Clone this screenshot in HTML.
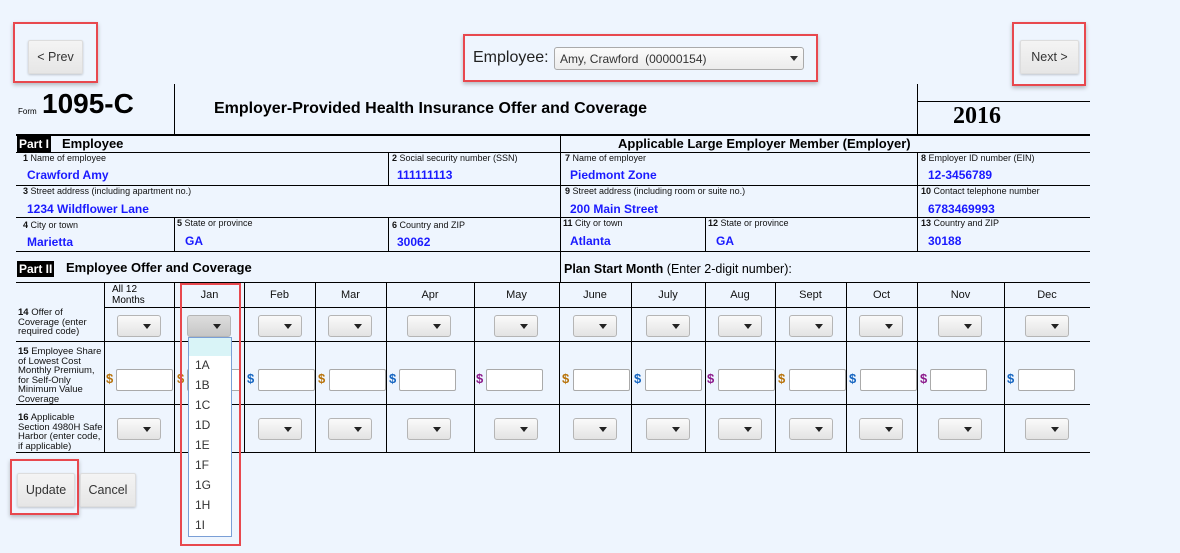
<!DOCTYPE html>
<html><head><meta charset="utf-8"><style>
*{box-sizing:border-box;margin:0;padding:0}
body{width:1180px;height:553px;background:#eef5fe;font-family:"Liberation Sans",Arial,sans-serif;position:relative;overflow:hidden;color:#000}
.a{position:absolute}
.red{position:absolute;border:2px solid #e8484e;box-shadow:0 2px 4px rgba(0,0,0,.25)}
.btn{position:absolute;background:linear-gradient(#f4f4f4,#e6e6e6);border:1px solid #ddd;border-radius:2px;box-shadow:0 1px 2px rgba(0,0,0,.2);font-family:"Liberation Sans",sans-serif;font-size:12.5px;color:#333;display:flex;align-items:center;justify-content:center}
.hl{position:absolute;height:1px;background:#000}
.vl{position:absolute;width:1px;background:#000}
.lb{position:absolute;font-size:9px;color:#111;white-space:nowrap}
.lb b{font-weight:bold}
.v{position:absolute;font-size:12px;font-weight:bold;color:#1a1aff;white-space:nowrap}
.sel{position:absolute;width:44px;height:22px;border:1px solid #b5b5b5;border-radius:3px;background:linear-gradient(#fafafa,#e3e3e3)}
.sel:after{content:"";position:absolute;right:9px;top:8px;border-left:4px solid transparent;border-right:4px solid transparent;border-top:5px solid #222}
.inp{position:absolute;height:22px;background:#fff;border:1px solid #aaa;border-radius:2px}
.d{position:absolute;font-size:13px;font-weight:bold}
.mh{position:absolute;font-size:11px;color:#111;text-align:center;top:289px}
.rl{position:absolute;font-size:9.5px;line-height:9.5px;color:#111;left:18px}
.it{position:absolute;left:195px;font-family:"Liberation Sans",sans-serif;font-size:12px;color:#333}
</style></head><body>
<div class="red" style="left:13px;top:22px;width:85px;height:61px"></div>
<div class="btn" style="left:28px;top:40px;width:55px;height:34px">&lt; Prev</div>
<div class="red" style="left:463px;top:34px;width:355px;height:48px"></div>
<div class="a" style="left:473px;top:49px;font-family:'Liberation Sans',sans-serif;font-size:16px;color:#222">Employee:</div>
<div class="a" style="left:554px;top:47px;width:250px;height:23px;border:1px solid #aaa;border-radius:3px;background:linear-gradient(#fbfbfb,#ececec);font-family:'Liberation Sans',sans-serif;font-size:12px;color:#333;padding:4px 0 0 5px">Amy, Crawford&nbsp; (00000154)</div>
<div class="a" style="left:790px;top:56px;border-left:4px solid transparent;border-right:4px solid transparent;border-top:5px solid #333"></div>
<div class="red" style="left:1012px;top:22px;width:74px;height:64px"></div>
<div class="btn" style="left:1020px;top:40px;width:59px;height:34px">Next &gt;</div>

<div class="a" style="left:18px;top:107px;font-size:8px">Form</div>
<div class="a" style="left:42px;top:88px;font-size:28px;font-weight:bold">1095-C</div>
<div class="vl" style="left:174px;top:84px;height:50px"></div>
<div class="a" style="left:214px;top:100px;font-family:'Liberation Sans',sans-serif;font-size:16px;font-weight:bold">Employer-Provided Health Insurance Offer and Coverage</div>
<div class="vl" style="left:917px;top:84px;height:50px"></div>
<div class="hl" style="left:917px;top:101px;width:173px"></div>
<div class="a" style="left:953px;top:103px;font-family:'Liberation Serif',serif;font-size:24px;font-weight:bold">2016</div>

<div class="hl" style="left:16px;top:134px;width:1074px;height:2px"></div>
<div class="a" style="left:17px;top:136px;background:#000;color:#fff;font-weight:bold;font-size:12px;padding:1px 2px">Part I</div>
<div class="a" style="left:62px;top:136px;font-size:13px;font-weight:bold">Employee</div>
<div class="a" style="left:618px;top:136px;font-size:13px;font-weight:bold">Applicable Large Employer Member (Employer)</div>
<div class="hl" style="left:16px;top:152px;width:1074px"></div>
<div class="hl" style="left:16px;top:185px;width:1074px"></div>
<div class="hl" style="left:16px;top:217px;width:1074px"></div>
<div class="hl" style="left:16px;top:251px;width:1074px"></div>
<div class="vl" style="left:560px;top:134px;height:148px"></div>
<div class="vl" style="left:388px;top:152px;height:33px"></div>
<div class="vl" style="left:917px;top:152px;height:99px"></div>
<div class="vl" style="left:174px;top:217px;height:34px"></div>
<div class="vl" style="left:388px;top:217px;height:34px"></div>
<div class="vl" style="left:705px;top:217px;height:34px"></div>

<div class="lb" style="left:23px;top:153px"><b>1</b> Name of employee</div><div class="v" style="left:27px;top:168px">Crawford Amy</div>
<div class="lb" style="left:392px;top:153px"><b>2</b> Social security number (SSN)</div><div class="v" style="left:397px;top:168px">111111113</div>
<div class="lb" style="left:565px;top:153px"><b>7</b> Name of employer</div><div class="v" style="left:570px;top:168px">Piedmont Zone</div>
<div class="lb" style="left:921px;top:153px"><b>8</b> Employer ID number (EIN)</div><div class="v" style="left:928px;top:168px">12-3456789</div>
<div class="lb" style="left:23px;top:186px"><b>3</b> Street address (including apartment no.)</div><div class="v" style="left:27px;top:202px">1234 Wildflower Lane</div>
<div class="lb" style="left:565px;top:186px"><b>9</b> Street address (including room or suite no.)</div><div class="v" style="left:570px;top:202px">200 Main Street</div>
<div class="lb" style="left:921px;top:186px"><b>10</b> Contact telephone number</div><div class="v" style="left:928px;top:202px">6783469993</div>
<div class="lb" style="left:23px;top:220px"><b>4</b> City or town</div><div class="v" style="left:27px;top:235px">Marietta</div>
<div class="lb" style="left:177px;top:218px"><b>5</b> State or province</div><div class="v" style="left:185px;top:234px">GA</div>
<div class="lb" style="left:392px;top:220px"><b>6</b> Country and ZIP</div><div class="v" style="left:397px;top:235px">30062</div>
<div class="lb" style="left:563px;top:218px"><b>11</b> City or town</div><div class="v" style="left:570px;top:234px">Atlanta</div>
<div class="lb" style="left:708px;top:218px"><b>12</b> State or province</div><div class="v" style="left:716px;top:234px">GA</div>
<div class="lb" style="left:921px;top:218px"><b>13</b> Country and ZIP</div><div class="v" style="left:928px;top:234px">30188</div>

<div class="a" style="left:17px;top:261px;background:#000;color:#fff;font-weight:bold;font-size:12px;padding:1px 2px">Part II</div>
<div class="a" style="left:66px;top:260px;font-size:13px;font-weight:bold">Employee Offer and Coverage</div>
<div class="a" style="left:564px;top:262px;font-size:12.5px"><b>Plan Start Month</b> (Enter 2-digit number):</div>

<div class="hl" style="left:16px;top:282px;width:1074px"></div>
<div class="hl" style="left:104px;top:307px;width:986px"></div>
<div class="hl" style="left:16px;top:341px;width:1074px"></div>
<div class="hl" style="left:16px;top:404px;width:1074px"></div>
<div class="hl" style="left:16px;top:452px;width:1074px"></div>
<div class="vl" style="left:104px;top:282px;height:170px"></div>
<div class="vl" style="left:174px;top:282px;height:170px"></div>
<div class="vl" style="left:244px;top:282px;height:170px"></div>
<div class="vl" style="left:315px;top:282px;height:170px"></div>
<div class="vl" style="left:386px;top:282px;height:170px"></div>
<div class="vl" style="left:474px;top:282px;height:170px"></div>
<div class="vl" style="left:559px;top:282px;height:170px"></div>
<div class="vl" style="left:631px;top:282px;height:170px"></div>
<div class="vl" style="left:705px;top:282px;height:170px"></div>
<div class="vl" style="left:775px;top:282px;height:170px"></div>
<div class="vl" style="left:846px;top:282px;height:170px"></div>
<div class="vl" style="left:917px;top:282px;height:170px"></div>
<div class="vl" style="left:1004px;top:282px;height:170px"></div>

<div class="a" style="left:112px;top:284px;font-size:10px;line-height:11px">All 12<br>Months</div>
<div class="mh" style="left:175px;width:69px">Jan</div>
<div class="mh" style="left:244px;width:71px">Feb</div>
<div class="mh" style="left:315px;width:71px">Mar</div>
<div class="mh" style="left:386px;width:88px">Apr</div>
<div class="mh" style="left:474px;width:85px">May</div>
<div class="mh" style="left:559px;width:72px">June</div>
<div class="mh" style="left:631px;width:74px">July</div>
<div class="mh" style="left:705px;width:70px">Aug</div>
<div class="mh" style="left:775px;width:71px">Sept</div>
<div class="mh" style="left:846px;width:71px">Oct</div>
<div class="mh" style="left:917px;width:87px">Nov</div>
<div class="mh" style="left:1004px;width:86px">Dec</div>

<div class="rl" style="top:308px"><b>14</b> Offer of<br>Coverage (enter<br>required code)</div>
<div class="rl" style="top:347px"><b>15</b> Employee Share<br>of Lowest Cost<br>Monthly Premium,<br>for Self-Only<br>Minimum Value<br>Coverage</div>
<div class="rl" style="top:413px"><b>16</b> Applicable<br>Section 4980H Safe<br>Harbor (enter code,<br>if applicable)</div>

<div class="sel" style="left:117px;top:315px"></div>
<div class="sel" style="left:187px;top:315px;background:linear-gradient(#ddd,#c6c6c6)"></div>
<div class="sel" style="left:258px;top:315px"></div>
<div class="sel" style="left:328px;top:315px"></div>
<div class="sel" style="left:407px;top:315px"></div>
<div class="sel" style="left:494px;top:315px"></div>
<div class="sel" style="left:573px;top:315px"></div>
<div class="sel" style="left:646px;top:315px"></div>
<div class="sel" style="left:718px;top:315px"></div>
<div class="sel" style="left:789px;top:315px"></div>
<div class="sel" style="left:859px;top:315px"></div>
<div class="sel" style="left:938px;top:315px"></div>
<div class="sel" style="left:1025px;top:315px"></div>
<div class="sel" style="left:117px;top:418px"></div>
<div class="sel" style="left:258px;top:418px"></div>
<div class="sel" style="left:328px;top:418px"></div>
<div class="sel" style="left:407px;top:418px"></div>
<div class="sel" style="left:494px;top:418px"></div>
<div class="sel" style="left:573px;top:418px"></div>
<div class="sel" style="left:646px;top:418px"></div>
<div class="sel" style="left:718px;top:418px"></div>
<div class="sel" style="left:789px;top:418px"></div>
<div class="sel" style="left:859px;top:418px"></div>
<div class="sel" style="left:938px;top:418px"></div>
<div class="sel" style="left:1025px;top:418px"></div>
<div class="d" style="left:106px;top:371px;color:#b8730a">$</div><div class="inp" style="left:116px;top:369px;width:57px"></div>
<div class="d" style="left:177px;top:371px;color:#b8730a">$</div><div class="inp" style="left:187px;top:369px;width:54px"></div>
<div class="d" style="left:247px;top:371px;color:#1565c0">$</div><div class="inp" style="left:258px;top:369px;width:57px"></div>
<div class="d" style="left:318px;top:371px;color:#b8730a">$</div><div class="inp" style="left:329px;top:369px;width:57px"></div>
<div class="d" style="left:389px;top:371px;color:#1565c0">$</div><div class="inp" style="left:399px;top:369px;width:57px"></div>
<div class="d" style="left:476px;top:371px;color:#8b1a8b">$</div><div class="inp" style="left:486px;top:369px;width:57px"></div>
<div class="d" style="left:562px;top:371px;color:#b8730a">$</div><div class="inp" style="left:573px;top:369px;width:57px"></div>
<div class="d" style="left:634px;top:371px;color:#1565c0">$</div><div class="inp" style="left:645px;top:369px;width:57px"></div>
<div class="d" style="left:707px;top:371px;color:#8b1a8b">$</div><div class="inp" style="left:718px;top:369px;width:57px"></div>
<div class="d" style="left:778px;top:371px;color:#b8730a">$</div><div class="inp" style="left:789px;top:369px;width:57px"></div>
<div class="d" style="left:849px;top:371px;color:#1565c0">$</div><div class="inp" style="left:860px;top:369px;width:57px"></div>
<div class="d" style="left:920px;top:371px;color:#8b1a8b">$</div><div class="inp" style="left:930px;top:369px;width:57px"></div>
<div class="d" style="left:1007px;top:371px;color:#1565c0">$</div><div class="inp" style="left:1018px;top:369px;width:57px"></div>

<div class="a" style="left:188px;top:337px;width:44px;height:200px;background:#fff;border:1px solid #7a9fd6"></div>
<div class="a" style="left:189px;top:338px;width:42px;height:18px;background:#d9f4f7"></div>
<div class="it" style="top:358px">1A</div>
<div class="it" style="top:378px">1B</div>
<div class="it" style="top:398px">1C</div>
<div class="it" style="top:418px">1D</div>
<div class="it" style="top:438px">1E</div>
<div class="it" style="top:458px">1F</div>
<div class="it" style="top:478px">1G</div>
<div class="it" style="top:498px">1H</div>
<div class="it" style="top:518px">1I</div>
<div class="red" style="left:180px;top:283px;width:61px;height:263px;box-shadow:none"></div>

<div class="red" style="left:10px;top:459px;width:69px;height:56px"></div>
<div class="btn" style="left:17px;top:473px;width:58px;height:34px">Update</div>
<div class="btn" style="left:80px;top:473px;width:56px;height:34px">Cancel</div>
</body></html>
